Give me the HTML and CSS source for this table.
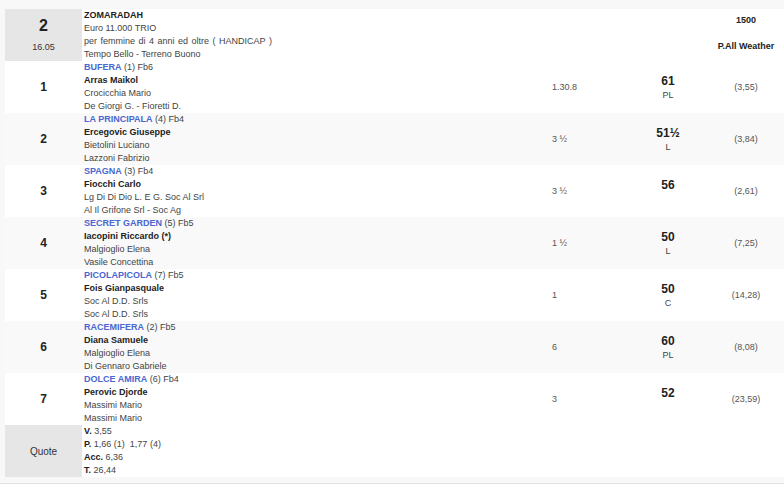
FILE: index.html
```html
<!DOCTYPE html>
<html lang="it">
<head>
<meta charset="utf-8">
<title>Corsa 2 - ZOMARADAH</title>
<link rel="stylesheet" href="styles.css">
</head>
<body>
<div class="wrap">
  <div class="race">
    <div class="row head">
      <div class="num-cell grey">
        <span class="race-no">2</span>
        <span class="race-time">16.05</span>
      </div>
      <div class="info">
        <div class="b">ZOMARADAH</div>
        <div>Euro 11.000 TRIO</div>
        <div class="wide">per femmine di 4 anni ed oltre ( HANDICAP )</div>
        <div>Tempo Bello - Terreno Buono</div>
      </div>
      <div></div>
      <div></div>
      <div class="track">
        <span class="b">1500</span>
        <span class="b">P.All Weather</span>
      </div>
      <div></div>
    </div>

    <div class="row">
      <div class="num-cell"><span class="pos">1</span></div>
      <div class="info">
        <div><span class="horse">BUFERA</span> (1) Fb6</div>
        <div class="b">Arras Maikol</div>
        <div>Crocicchia Mario</div>
        <div>De Giorgi G. - Fioretti D.</div>
      </div>
      <div class="dist">1.30.8</div>
      <div class="weight"><span class="kg">61</span><span class="eq">PL</span></div>
      <div class="odds">(3,55)</div>
      <div></div>
    </div>

    <div class="row alt">
      <div class="num-cell"><span class="pos">2</span></div>
      <div class="info">
        <div><span class="horse">LA PRINCIPALA</span> (4) Fb4</div>
        <div class="b">Ercegovic Giuseppe</div>
        <div>Bietolini Luciano</div>
        <div>Lazzoni Fabrizio</div>
      </div>
      <div class="dist">3 ½</div>
      <div class="weight"><span class="kg">51½</span><span class="eq">L</span></div>
      <div class="odds">(3,84)</div>
      <div></div>
    </div>

    <div class="row">
      <div class="num-cell"><span class="pos">3</span></div>
      <div class="info">
        <div><span class="horse">SPAGNA</span> (3) Fb4</div>
        <div class="b">Fiocchi Carlo</div>
        <div>Lg Di Di Dio L. E G. Soc Al Srl</div>
        <div>Al Il Grifone Srl - Soc Ag</div>
      </div>
      <div class="dist">3 ½</div>
      <div class="weight"><span class="kg">56</span><span class="eq"></span></div>
      <div class="odds">(2,61)</div>
      <div></div>
    </div>

    <div class="row alt">
      <div class="num-cell"><span class="pos">4</span></div>
      <div class="info">
        <div><span class="horse">SECRET GARDEN</span> (5) Fb5</div>
        <div class="b">Iacopini Riccardo (*)</div>
        <div>Malgioglio Elena</div>
        <div>Vasile Concettina</div>
      </div>
      <div class="dist">1 ½</div>
      <div class="weight"><span class="kg">50</span><span class="eq">L</span></div>
      <div class="odds">(7,25)</div>
      <div></div>
    </div>

    <div class="row">
      <div class="num-cell"><span class="pos">5</span></div>
      <div class="info">
        <div><span class="horse">PICOLAPICOLA</span> (7) Fb5</div>
        <div class="b">Fois Gianpasquale</div>
        <div>Soc Al D.D. Srls</div>
        <div>Soc Al D.D. Srls</div>
      </div>
      <div class="dist">1</div>
      <div class="weight"><span class="kg">50</span><span class="eq">C</span></div>
      <div class="odds">(14,28)</div>
      <div></div>
    </div>

    <div class="row alt">
      <div class="num-cell"><span class="pos">6</span></div>
      <div class="info">
        <div><span class="horse">RACEMIFERA</span> (2) Fb5</div>
        <div class="b">Diana Samuele</div>
        <div>Malgioglio Elena</div>
        <div>Di Gennaro Gabriele</div>
      </div>
      <div class="dist">6</div>
      <div class="weight"><span class="kg">60</span><span class="eq">PL</span></div>
      <div class="odds">(8,08)</div>
      <div></div>
    </div>

    <div class="row">
      <div class="num-cell"><span class="pos">7</span></div>
      <div class="info">
        <div><span class="horse">DOLCE AMIRA</span> (6) Fb4</div>
        <div class="b">Perovic Djorde</div>
        <div>Massimi Mario</div>
        <div>Massimi Mario</div>
      </div>
      <div class="dist">3</div>
      <div class="weight"><span class="kg">52</span><span class="eq"></span></div>
      <div class="odds">(23,59)</div>
      <div></div>
    </div>

    <div class="row">
      <div class="num-cell grey"><span class="quote">Quote</span></div>
      <div class="info">
        <div><span class="b">V.</span> 3,55</div>
        <div><span class="b">P.</span> 1,66 (1)&nbsp; 1,77 (4)</div>
        <div><span class="b">Acc.</span> 6,36</div>
        <div><span class="b">T.</span> 26,44</div>
      </div>
      <div></div>
      <div></div>
      <div></div>
      <div></div>
    </div>
  </div>
</div>
</body>
</html>
```

FILE: styles.css
```css
html, body {
  margin: 0;
  padding: 0;
  background: #ffffff;
}

body {
  font-family: "Liberation Sans", Arial, sans-serif;
  font-size: 9px;
  color: #444444;
}

.wrap {
  background: #f8f8f8;
  padding: 9px 0 6px 5px;
  border-bottom: 1px solid #e2e2e2;
}

.race {
  background: #ffffff;
}

.row {
  display: grid;
  grid-template-columns: 77px 466px 72px 96px 60px 1fr;
  height: 52px;
  background: #ffffff;
}

.row.alt {
  background: #f9f9f9;
}

.num-cell {
  display: flex;
  flex-direction: column;
  align-items: center;
  justify-content: center;
  color: #222222;
}

.num-cell.grey {
  background: #e6e6e6;
}

.race-no {
  font-size: 16px;
  font-weight: bold;
  line-height: 18px;
}

.race-time {
  font-size: 9px;
  line-height: 12px;
  margin-top: 6px;
  color: #333333;
}

.pos {
  font-size: 12px;
  font-weight: bold;
}

.quote {
  font-size: 10px;
  color: #333333;
}

.info {
  padding-left: 2px;
  line-height: 13px;
  white-space: nowrap;
}

.wide {
  word-spacing: 1px;
}

.b {
  font-weight: bold;
  color: #222222;
}

.horse {
  color: #4a66d0;
  font-weight: bold;
}

.dist {
  display: flex;
  align-items: center;
  padding-left: 4px;
  color: #555555;
}

.weight {
  display: flex;
  flex-direction: column;
  align-items: center;
  justify-content: center;
}

.kg {
  font-size: 12px;
  font-weight: bold;
  line-height: 16px;
  color: #222222;
}

.eq {
  line-height: 13px;
  min-height: 13px;
  color: #444444;
}

.odds {
  display: flex;
  align-items: center;
  justify-content: center;
  color: #555555;
}

.track {
  display: flex;
  flex-direction: column;
  align-items: center;
  gap: 13px;
  padding-top: 5px;
  line-height: 13px;
}
```
